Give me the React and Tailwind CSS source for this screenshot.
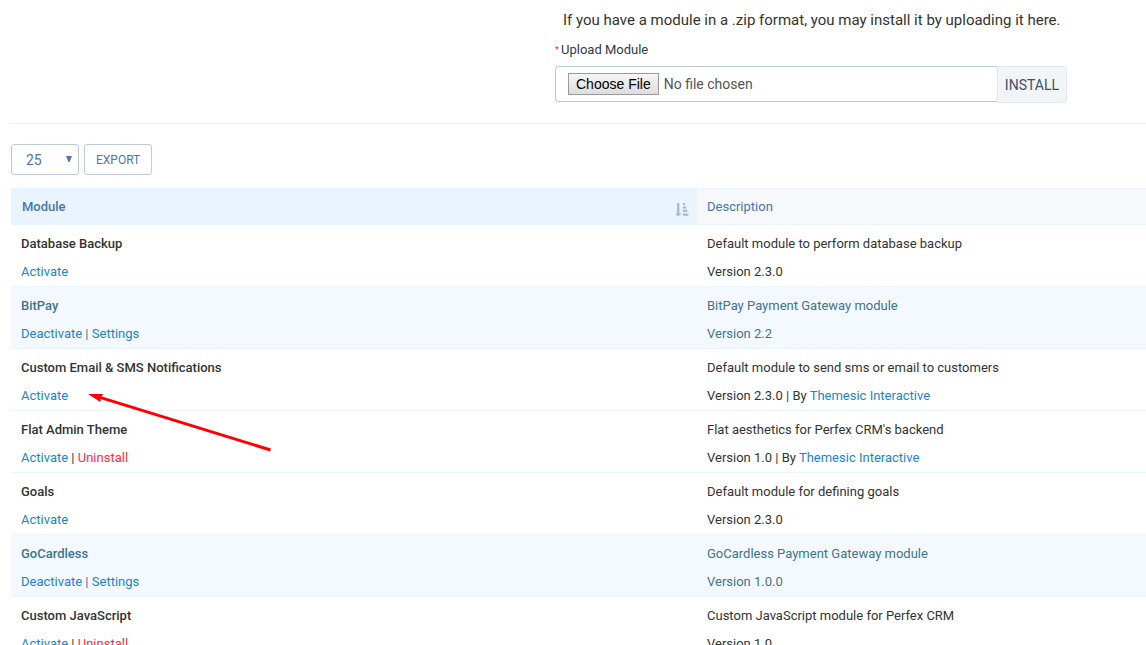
import React from "react";

const modules = [
  { name: "Database Backup", text: "Default module to perform database backup", version: "2.3.0" },
  { name: "BitPay", text: "BitPay Payment Gateway module", version: "2.2", active: true },
  { name: "Custom Email & SMS Notifications", text: "Default module to send sms or email to customers", version: "2.3.0", author: "Themesic Interactive", pointer: true },
  { name: "Flat Admin Theme", text: "Flat aesthetics for Perfex CRM's backend", version: "1.0", author: "Themesic Interactive", removable: true },
  { name: "Goals", text: "Default module for defining goals", version: "2.3.0" },
  { name: "GoCardless", text: "GoCardless Payment Gateway module", version: "1.0.0", active: true },
  { name: "Custom JavaScript", text: "Custom JavaScript module for Perfex CRM", version: "1.0", removable: true },
];

function SortIcon() {
  return (
    <svg className="h-[14px] w-[14px]" viewBox="0 0 14 14" fill="#a3bbdc" aria-hidden="true">
      <path d="M2 0h2.4v10.4h2.2L3.2 13.4 0 10.4h2z" />
      <path d="M8 0h2.2v2.2H8zM8 3.4h3.2v2.2H8zM8 6.8h4.2V9H8zM8 10.4h5.4v2.4H8z" />
    </svg>
  );
}

function Pointer() {
  return (
    <svg
      className="pointer-events-none absolute left-[77px] top-[40px] z-10 h-[64px] w-[186px]"
      viewBox="0 0 186 64"
      fill="none"
      aria-hidden="true"
    >
      <path d="M12 8.4L182.5 61" stroke="#ff0000" strokeWidth="3" />
      <path d="M0 5L15 5L13 8.6L12.4 13z" fill="#ff0000" />
    </svg>
  );
}

function Link({ danger, children }) {
  return (
    <a href="#" className={danger ? "text-[#fc2d42]" : "text-[#1a86c9]"}>
      {children}
    </a>
  );
}

function ModuleRow({ item }) {
  return (
    <tr className={item.active ? "bg-[#f4f9ff] text-[#3f7391]" : "text-[#333333]"}>
      <td className="relative border-b border-[#e9f4ff] px-[10px] pb-1 pt-[9px] align-top">
        <p className="mb-2 font-medium">{item.name}</p>
        <p>
          <Link>{item.active ? "Deactivate" : "Activate"}</Link>
          {item.active && <> | <Link>Settings</Link></>}
          {item.removable && <> | <Link danger>Uninstall</Link></>}
        </p>
        {item.pointer && <Pointer />}
      </td>
      <td className="border-b border-[#e9f4ff] px-[10px] pb-1 pt-[9px] align-top">
        <p className="mb-2">{item.text}</p>
        <p>
          Version {item.version}
          {item.author && <> | By <Link>{item.author}</Link></>}
        </p>
      </td>
    </tr>
  );
}

export default function App() {
  return (
    <main className="h-screen overflow-hidden bg-white pl-[11px] font-[Roboto,sans-serif] text-[13px] leading-5 text-[#333333]">
      <form className="grid grid-cols-[544px_minmax(0,512px)] pb-5">
        <div className="col-start-2">
          <p className="pl-2 pt-[10px] text-[15px]">If you have a module in a .zip format, you may install it by uploading it here.</p>
          <label htmlFor="module" className="mb-[6px] mt-[10px] flex items-center text-[#323a45]">
            <span className="w-[6px] text-[9px] text-[#fc2d42]">*</span>
            Upload Module
          </label>
          <div className="flex">
            <input
              id="module"
              type="file"
              className="h-9 min-w-0 flex-1 rounded-l border border-r-0 border-[#bfcbd9] px-3 py-[6px] text-[14px] leading-[22px] text-[#555555] file:mr-[5px] file:h-[22px] file:rounded-none file:border file:border-solid file:border-[#9a9a9a] file:bg-linear-to-b file:from-[#f6f6f6] file:to-[#dddddd] file:px-[7px] file:font-['Liberation_Sans',sans-serif] file:text-[14px] file:leading-5 file:text-black"
            />
            <button type="button" className="h-[37px] rounded-r border border-[#e4e8eb] bg-[#f1f5f8] px-[7px] text-[14px] text-[#415165]">
              INSTALL
            </button>
          </div>
        </div>
      </form>

      <hr className="border-[#eceef0]" />

      <div className="flex gap-[5px] pb-[13px] pt-5 text-[#4e75ad]">
        <div className="relative">
          <select
            aria-label="Rows per page"
            defaultValue="25"
            className="h-[31px] w-[68px] appearance-none rounded-[3px] border border-[#bfcbd9] bg-white pl-[14px] text-[14px]"
          >
            <option>25</option>
            <option>50</option>
            <option>100</option>
          </select>
          <svg className="pointer-events-none absolute right-[7px] top-3 h-[6px] w-[6px]" viewBox="0 0 6 6" fill="#4e75ad" aria-hidden="true">
            <path d="M0 0h6L3.5 6h-1z" />
          </svg>
        </div>
        <button type="button" className="h-[31px] rounded-[3px] border border-[#bfcbd9] px-[11px] text-[12px]">
          EXPORT
        </button>
      </div>

      <table className="w-full table-fixed border-separate border-spacing-0 text-left">
        <colgroup>
          <col className="w-[686px]" />
          <col />
        </colgroup>
        <thead>
          <tr className="text-[#4e75ad]">
            <th className="border-y border-[#e9f4ff] bg-[#e9f4ff] pb-[7px] pl-[11px] pr-2 pt-2 font-medium">
              <div className="flex items-center justify-between">
                Module
                <span className="block pt-[6px]"><SortIcon /></span>
              </div>
            </th>
            <th className="border-y border-[#e9f4ff] bg-[#f6f8fa] px-[10px] pb-[7px] pt-2 font-normal">Description</th>
          </tr>
        </thead>
        <tbody>
          {modules.map((item) => (
            <ModuleRow key={item.name} item={item} />
          ))}
        </tbody>
      </table>
    </main>
  );
}
